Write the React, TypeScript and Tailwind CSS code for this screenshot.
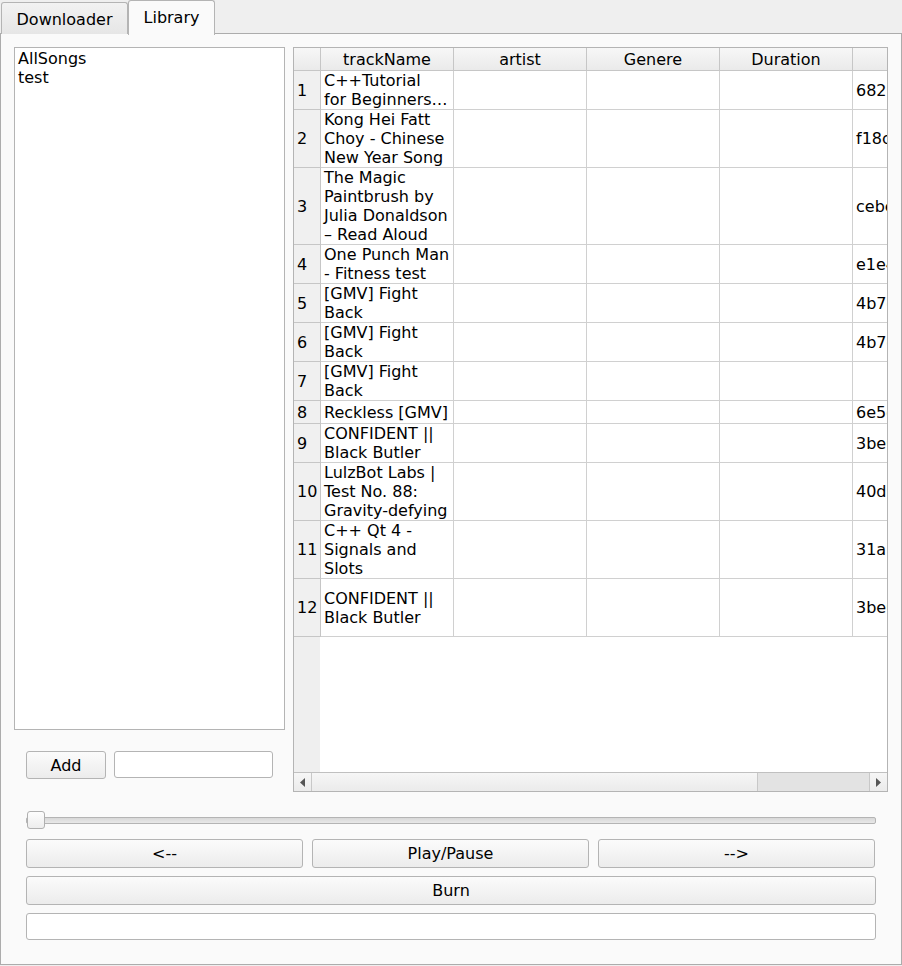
const rows = [
  { n: 1, h: "h-[39px]", title: ["C++Tutorial", "for Beginners…"], id: "682b1f0c9a" },
  { n: 2, h: "h-[58px]", title: ["Kong Hei Fatt", "Choy - Chinese", "New Year Song"], id: "f18c03de41" },
  { n: 3, h: "h-[77px]", title: ["The Magic", "Paintbrush by", "Julia Donaldson", "– Read Aloud"], id: "cebe9174a2" },
  { n: 4, h: "h-[39px]", title: ["One Punch Man", "- Fitness test"], id: "e1e4a0b7c2" },
  { n: 5, h: "h-[39px]", title: ["[GMV] Fight", "Back"], id: "4b7c2e19f0" },
  { n: 6, h: "h-[39px]", title: ["[GMV] Fight", "Back"], id: "4b7c2e19f0" },
  { n: 7, h: "h-[39px]", title: ["[GMV] Fight", "Back"], id: "" },
  { n: 8, h: "h-[23px]", title: ["Reckless [GMV]"], id: "6e5d8a03b1" },
  { n: 9, h: "h-[39px]", title: ["CONFIDENT ||", "Black Butler"], id: "3be0f71a4c" },
  { n: 10, h: "h-[58px]", title: ["LulzBot Labs |", "Test No. 88:", "Gravity-defying"], id: "40d9e26b7a" },
  { n: 11, h: "h-[58px]", title: ["C++ Qt 4 -", "Signals and", "Slots"], id: "31a7c0f5e2" },
  { n: 12, h: "h-[58px]", title: ["CONFIDENT ||", "Black Butler"], id: "3be0f71a4c" },
];

const headers = ["trackName", "artist", "Genere", "Duration", "id"];

function QtButton({ label, className = "" }: { label: string; className?: string }) {
  return (
    <button
      className={
        "flex items-center justify-center rounded-[3px] border border-[#b4b4b4] bg-gradient-to-b from-[#fbfbfb] to-[#ececec] text-black " +
        className
      }
    >
      {label}
    </button>
  );
}

function QtInput({ className = "" }: { className?: string }) {
  return <div className={"rounded-[3px] border border-[#b4b4b4] bg-white " + className} />;
}

function Table() {
  return (
    <div className="flex h-[745px] w-[595px] flex-col border border-[#b4b4b4] bg-white">
      <div className="flex flex-1 flex-col overflow-hidden">
        {/* header */}
        <div className="flex h-[23px] shrink-0">
          <div className="w-[27px] shrink-0 border-r border-b border-[#c6c6c6] bg-gradient-to-b from-[#f7f7f7] to-[#eaeaea]" />
          {headers.map((h, i) => (
            <div
              key={h}
              className="flex w-[133px] shrink-0 items-center justify-center border-r border-b border-[#c6c6c6] bg-gradient-to-b from-[#f7f7f7] to-[#eaeaea]"
            >
              {i < 4 ? h : ""}
            </div>
          ))}
        </div>

        {/* rows */}
        {rows.map((r) => (
          <div key={r.n} className={"flex shrink-0 " + r.h}>
            <div className="flex w-[27px] shrink-0 items-center border-r border-b border-[#c6c6c6] bg-[#f0f0f0] pl-[3px]">
              {r.n}
            </div>
            <div className="flex w-[133px] shrink-0 flex-col justify-center border-r border-b border-[#d0d0d0] pl-[3px]">
              {r.title.map((t, i) => (
                <span key={i} className="whitespace-nowrap">
                  {t}
                </span>
              ))}
            </div>
            <div className="w-[133px] shrink-0 border-r border-b border-[#d0d0d0]" />
            <div className="w-[133px] shrink-0 border-r border-b border-[#d0d0d0]" />
            <div className="w-[133px] shrink-0 border-r border-b border-[#d0d0d0]" />
            <div className="flex w-[133px] shrink-0 items-center border-r border-b border-[#d0d0d0] pl-[3px]">
              {r.id}
            </div>
          </div>
        ))}

        {/* empty area */}
        <div className="flex flex-1">
          <div className="w-[26px] shrink-0 bg-[#efefef]" />
          <div className="flex-1" />
        </div>
      </div>

      {/* horizontal scrollbar */}
      <div className="flex h-[19px] shrink-0 border-t border-[#c0c0c0] bg-gradient-to-b from-[#f6f6f6] to-[#ebebeb]">
        <div className="flex w-[18px] items-center justify-center border-r border-[#c8c8c8]">
          <svg width="5" height="9" viewBox="0 0 5 9">
            <path d="M5 0 L0 4.5 L5 9 Z" fill="#555" />
          </svg>
        </div>
        <div className="flex flex-1 justify-end">
          <div className="w-[112px] border-l border-[#c8c8c8] bg-[#e3e3e3]" />
        </div>
        <div className="flex w-[18px] items-center justify-center border-l border-[#c8c8c8]">
          <svg width="5" height="9" viewBox="0 0 5 9">
            <path d="M0 0 L5 4.5 L0 9 Z" fill="#555" />
          </svg>
        </div>
      </div>
    </div>
  );
}

export default function App() {
  return (
    <div className="h-[966px] w-[902px] overflow-hidden bg-[#efefef] font-['DejaVu_Sans',sans-serif] text-[16px] leading-[19px] text-black">
      {/* tabs */}
      <div className="relative z-10 flex h-[34px] items-end pl-px">
        <div className="flex h-[32px] w-[127px] items-center justify-center rounded-t-[3px] border border-b-0 border-[#b4b4b4] bg-gradient-to-b from-[#f2f2f2] to-[#e6e6e6] pt-[1px]">
          Downloader
        </div>
        <div className="-mb-px flex h-[35px] w-[87px] items-center justify-center rounded-t-[3px] border border-b-0 border-[#b4b4b4] bg-[#fafafa] pb-[2px]">
          Library
        </div>
      </div>

      {/* pane */}
      <div className="-mt-px flex h-[932px] w-[902px] flex-col border border-[#acacac] bg-[#fafafa] pt-[13px]">
        <div className="flex gap-[8px] pl-[13px]">
          <div className="flex w-[271px] flex-col">
            <div className="flex h-[683px] flex-col border border-[#b4b4b4] bg-white pl-[3px] pt-[1px]">
              <span>AllSongs</span>
              <span>test</span>
            </div>
            <div className="mt-[21px] flex gap-[8px] pl-[12px]">
              <QtButton label="Add" className="h-[28px] w-[80px]" />
              <QtInput className="h-[27px] w-[159px]" />
            </div>
          </div>
          <Table />
        </div>

        <div className="flex flex-col px-[25px]">
          {/* slider */}
          <div className="relative mt-[19px] flex h-[18px] items-center">
            <div className="h-[7px] w-full rounded-[2px] border border-[#b4b4b4] bg-gradient-to-b from-[#d8d8d8] to-[#e8e8e8]" />
            <div className="absolute top-0 left-[1px] h-[18px] w-[18px] rounded-[3px] border border-[#b0b0b0] bg-gradient-to-b from-[#fdfdfd] to-[#ededed]" />
          </div>

          <div className="mt-[10px] flex gap-[9px]">
            <QtButton label="<--" className="h-[29px] w-[277px]" />
            <QtButton label="Play/Pause" className="h-[29px] w-[277px]" />
            <QtButton label="-->" className="h-[29px] w-[277px]" />
          </div>
          <QtButton label="Burn" className="mt-[8px] h-[29px] w-full" />
          <QtInput className="mt-[8px] h-[27px] w-full" />
        </div>
      </div>
    </div>
  );
}
